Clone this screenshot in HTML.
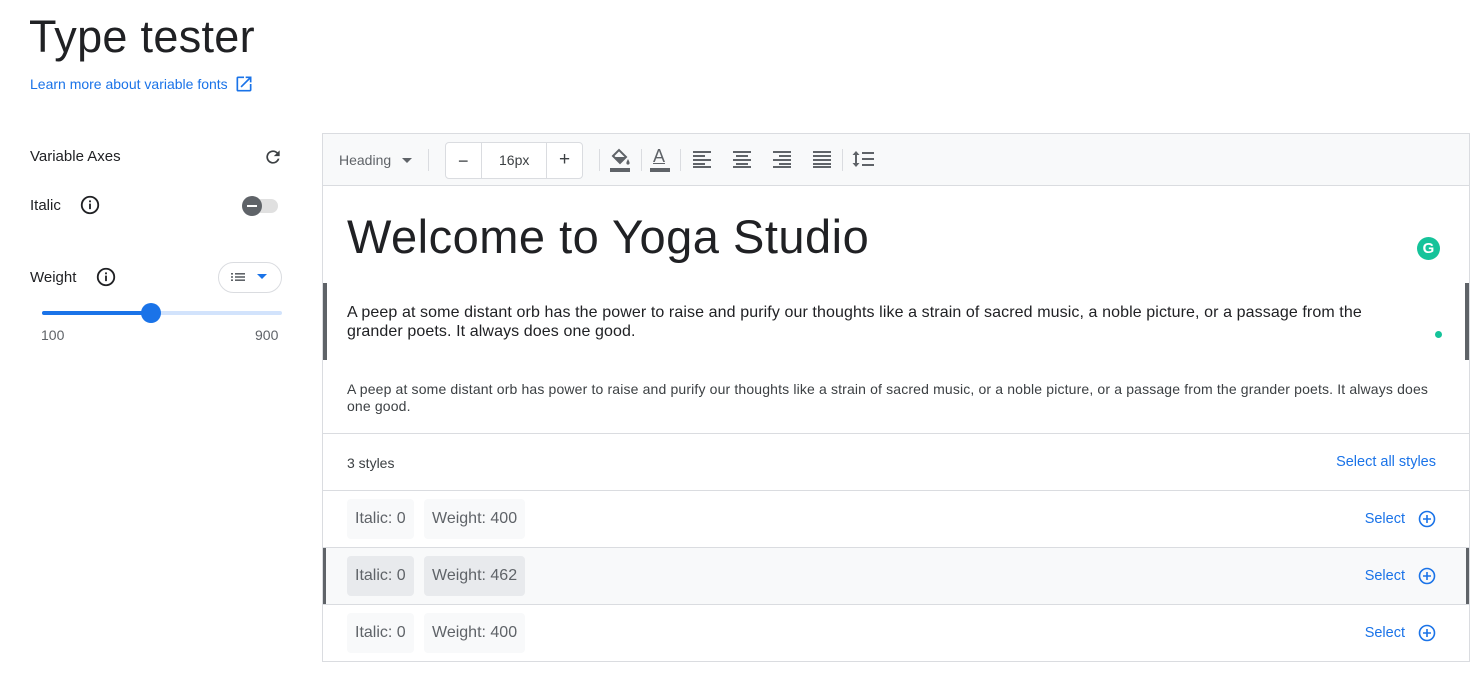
<!DOCTYPE html>
<html><head><meta charset="utf-8"><style>
*{box-sizing:border-box;margin:0;padding:0}
body{width:1482px;height:688px;background:#fff;font-family:"Liberation Sans",sans-serif;color:#202124;position:relative;overflow:hidden}
.abs{position:absolute}
h1{position:absolute;left:29px;top:11px;font-size:45px;font-weight:400;color:#202124;letter-spacing:0.3px}
.link{left:30px;top:74px;font-size:14px;color:#1a73e8}
.lbl{font-size:15px;color:#202124}
.panel{left:322px;top:133px;width:1148px;height:529px;border:1px solid #dadce0}
.tb{left:323px;top:134px;width:1146px;height:52px;background:#f8f9fa;border-bottom:1px solid #dadce0}
.row{left:323px;width:1146px;height:57px;border-top:1px solid #dadce0}
.chip{position:absolute;top:8px;height:40px;background:#f8f9fa;border-radius:4px;font-size:16px;color:#5f6368;line-height:40px;padding:0 8px}
.sel{position:absolute;right:33px;top:19px;font-size:14.5px;color:#1a73e8;display:flex;align-items:center;gap:13px}
</style></head><body>
<h1>Type tester</h1>
<div class="abs link">Learn more about variable fonts <svg width="20" height="20" viewBox="0 0 24 24" style="vertical-align:-5px;margin-left:2px"><path d="M19 19H5V5h7V3H5a2 2 0 0 0-2 2v14a2 2 0 0 0 2 2h14c1.1 0 2-.9 2-2v-7h-2v7zM14 3v2h3.59l-9.83 9.83 1.41 1.41L19 6.41V10h2V3h-7z" fill="#1a73e8"/></svg></div>

<div class="abs lbl" style="left:30px;top:148px">Variable Axes</div>
<svg class="abs" style="left:263px;top:147px" width="20" height="20" viewBox="0 0 24 24"><path d="M17.65 6.35A7.96 7.96 0 0 0 12 4a8 8 0 1 0 7.73 10h-2.08A6 6 0 1 1 12 6c1.66 0 3.14.69 4.22 1.78L13 11h7V4l-2.35 2.35z" fill="#3c4043"/></svg>
<div class="abs lbl" style="left:30px;top:197px">Italic</div>
<svg class="abs" style="left:79px;top:194px" width="22" height="22" viewBox="0 0 24 24"><circle cx="12" cy="12" r="9" fill="none" stroke="#202124" stroke-width="2"/><rect x="11" y="10.5" width="2" height="6" fill="#202124"/><rect x="11" y="7" width="2" height="2" fill="#202124"/></svg>
<div class="abs" style="left:244px;top:199px;width:34px;height:14px;border-radius:7px;background:#e0e0e0"></div>
<div class="abs" style="left:242px;top:196px;width:20px;height:20px;border-radius:50%;background:#5f6368"></div>
<div class="abs" style="left:247px;top:205px;width:10px;height:2px;background:#fff"></div>
<div class="abs lbl" style="left:30px;top:269px">Weight</div>
<svg class="abs" style="left:95px;top:266px" width="22" height="22" viewBox="0 0 24 24"><circle cx="12" cy="12" r="9" fill="none" stroke="#202124" stroke-width="2"/><rect x="11" y="10.5" width="2" height="6" fill="#202124"/><rect x="11" y="7" width="2" height="2" fill="#202124"/></svg>
<div class="abs" style="left:218px;top:262px;width:64px;height:31px;border:1px solid #dadce0;border-radius:16px"></div>
<svg class="abs" style="left:231px;top:271px" width="16" height="12" viewBox="0 0 16 12"><g fill="#5f6368"><rect x="0" y="2" width="2" height="1.6"/><rect x="4" y="2" width="10" height="1.6"/><rect x="0" y="5.2" width="2" height="1.6"/><rect x="4" y="5.2" width="10" height="1.6"/><rect x="0" y="8.4" width="2" height="1.6"/><rect x="4" y="8.4" width="10" height="1.6"/></g></svg>
<svg class="abs" style="left:257px;top:274px" width="10" height="6"><path d="M0 0h10L5 5z" fill="#1a73e8"/></svg>
<div class="abs" style="left:42px;top:311px;width:240px;height:4px;background:#d2e3fc;border-radius:2px"></div>
<div class="abs" style="left:42px;top:311px;width:110px;height:4px;background:#1a73e8;border-radius:2px"></div>
<div class="abs" style="left:141px;top:303px;width:20px;height:20px;border-radius:50%;background:#1a73e8"></div>
<div class="abs" style="left:41px;top:327px;font-size:14px;color:#5f6368">100</div>
<div class="abs" style="left:255px;top:327px;font-size:14px;color:#5f6368">900</div>

<div class="abs panel"></div>
<div class="abs tb">
 <div class="abs" style="left:16px;top:18px;font-size:14px;color:#5f6368">Heading</div>
 <svg class="abs" style="left:79px;top:24px" width="10" height="5"><path d="M0 0h10L5 5z" fill="#5f6368"/></svg>
 <div class="abs" style="left:105px;top:15px;width:1px;height:22px;background:#dadce0"></div>
 <div class="abs" style="left:122px;top:8px;width:138px;height:37px;border:1px solid #dadce0;border-radius:4px;background:#fff"></div>
 <div class="abs" style="left:158px;top:9px;width:1px;height:35px;background:#dadce0"></div>
 <div class="abs" style="left:223px;top:9px;width:1px;height:35px;background:#dadce0"></div>
 <div class="abs" style="left:135px;top:17px;font-size:18px;color:#3c4043">−</div>
 <div class="abs" style="left:176px;top:18px;font-size:14px;color:#3c4043">16px</div>
 <div class="abs" style="left:236px;top:15px;font-size:19px;color:#3c4043">+</div>
 <div class="abs" style="left:276px;top:15px;width:1px;height:22px;background:#dadce0"></div>
 <svg class="abs" style="left:286px;top:13px" width="22" height="26" viewBox="0 0 22 26"><path d="M4 9l6-6 7 7-6 6z" fill="none" stroke="#5f6368" stroke-width="2"/><path d="M4 10h13l-6 6z" fill="#5f6368"/><path d="M19 12c-1 2-1.6 3-1.6 4a1.6 1.6 0 0 0 3.2 0c0-1-.6-2-1.6-4z" fill="#5f6368"/><rect x="1" y="21" width="20" height="4" fill="#5f6368"/></svg>
 <div class="abs" style="left:318px;top:15px;width:1px;height:22px;background:#dadce0"></div>
 <div class="abs" style="left:330px;top:12px;font-size:18px;color:#5f6368;text-decoration:underline">A</div>
 <div class="abs" style="left:327px;top:34px;width:20px;height:4px;background:#5f6368"></div>
 <div class="abs" style="left:357px;top:15px;width:1px;height:22px;background:#dadce0"></div>
 <svg class="abs" style="left:369px;top:16px" width="20" height="18"><g fill="#5f6368"><rect x="1" y="1" width="18" height="2"/><rect x="1" y="5" width="12" height="2"/><rect x="1" y="9" width="18" height="2"/><rect x="1" y="13" width="12" height="2"/><rect x="1" y="16" width="18" height="2"/></g></svg>
 <svg class="abs" style="left:409px;top:16px" width="20" height="18"><g fill="#5f6368"><rect x="1" y="1" width="18" height="2"/><rect x="4" y="5" width="12" height="2"/><rect x="1" y="9" width="18" height="2"/><rect x="4" y="13" width="12" height="2"/><rect x="1" y="16" width="18" height="2"/></g></svg>
 <svg class="abs" style="left:449px;top:16px" width="20" height="18"><g fill="#5f6368"><rect x="1" y="1" width="18" height="2"/><rect x="7" y="5" width="12" height="2"/><rect x="1" y="9" width="18" height="2"/><rect x="7" y="13" width="12" height="2"/><rect x="1" y="16" width="18" height="2"/></g></svg>
 <svg class="abs" style="left:489px;top:16px" width="20" height="18"><g fill="#5f6368"><rect x="1" y="1" width="18" height="2"/><rect x="1" y="5" width="18" height="2"/><rect x="1" y="9" width="18" height="2"/><rect x="1" y="13" width="18" height="2"/><rect x="1" y="16" width="18" height="2"/></g></svg>
 <div class="abs" style="left:519px;top:15px;width:1px;height:22px;background:#dadce0"></div>
 <svg class="abs" style="left:528px;top:15px" width="24" height="20"><path d="M5 2l-3.5 4h7zM5 18l-3.5-4h7z" fill="#5f6368"/><rect x="4" y="5" width="2" height="10" fill="#5f6368"/><g fill="#5f6368"><rect x="11" y="3" width="12" height="2"/><rect x="11" y="9" width="12" height="2"/><rect x="11" y="15" width="12" height="2"/></g></svg>
</div>

<div class="abs" style="left:347px;top:209px;font-size:47px;font-weight:400;color:#202124;letter-spacing:0.5px;white-space:nowrap">Welcome to Yoga Studio</div>
<div class="abs" style="left:1417px;top:237px;width:23px;height:23px;border-radius:50%;background:#15c39a;color:#fff;font-size:15px;font-weight:bold;text-align:center;line-height:23px">G</div>
<div class="abs" style="left:323px;top:283px;width:4px;height:77px;background:#5f6368"></div>
<div class="abs" style="left:1465px;top:283px;width:4px;height:77px;background:#5f6368"></div>
<div class="abs" style="left:347px;top:303px;width:1060px;font-size:16px;line-height:19px;color:#202124;letter-spacing:0.1px">A peep at some distant orb has the power to raise and purify our thoughts like a strain of sacred music, a noble picture, or a passage from the grander poets. It always does one good.</div>
<div class="abs" style="left:1435px;top:331px;width:7px;height:7px;border-radius:50%;background:#15c39a"></div>
<div class="abs" style="left:347px;top:381px;width:1095px;font-size:14px;line-height:17px;color:#3c4043;letter-spacing:0.15px">A peep at some distant orb has power to raise and purify our thoughts like a strain of sacred music, or a noble picture, or a passage from the grander poets. It always does one good.</div>

<div class="abs row" style="top:433px;height:57px"><div class="abs" style="left:24px;top:21px;font-size:14px;color:#3c4043">3 styles</div><div class="abs" style="right:33px;top:20px;font-size:14.5px;color:#1a73e8">Select all styles</div></div>
<div class="abs row" style="top:490px"><div class="chip" style="left:24px">Italic: 0</div><div class="chip" style="left:101px">Weight: 400</div><div class="sel">Select <svg width="18" height="18" viewBox="0 0 18 18"><circle cx="9" cy="9" r="7.5" fill="none" stroke="#1a73e8" stroke-width="1.6"/><path d="M9 5v8M5 9h8" stroke="#1a73e8" stroke-width="1.6"/></svg></div></div>
<div class="abs row" style="top:547px;background:#f8f9fa"><div class="chip" style="left:24px;background:#e8eaed">Italic: 0</div><div class="chip" style="left:101px;background:#e8eaed">Weight: 462</div><div class="sel">Select <svg width="18" height="18" viewBox="0 0 18 18"><circle cx="9" cy="9" r="7.5" fill="none" stroke="#1a73e8" stroke-width="1.6"/><path d="M9 5v8M5 9h8" stroke="#1a73e8" stroke-width="1.6"/></svg></div></div>
<div class="abs" style="left:323px;top:548px;width:3px;height:56px;background:#5f6368"></div>
<div class="abs" style="left:1466px;top:548px;width:3px;height:56px;background:#5f6368"></div>
<div class="abs row" style="top:604px"><div class="chip" style="left:24px">Italic: 0</div><div class="chip" style="left:101px">Weight: 400</div><div class="sel">Select <svg width="18" height="18" viewBox="0 0 18 18"><circle cx="9" cy="9" r="7.5" fill="none" stroke="#1a73e8" stroke-width="1.6"/><path d="M9 5v8M5 9h8" stroke="#1a73e8" stroke-width="1.6"/></svg></div></div>
</body></html>
